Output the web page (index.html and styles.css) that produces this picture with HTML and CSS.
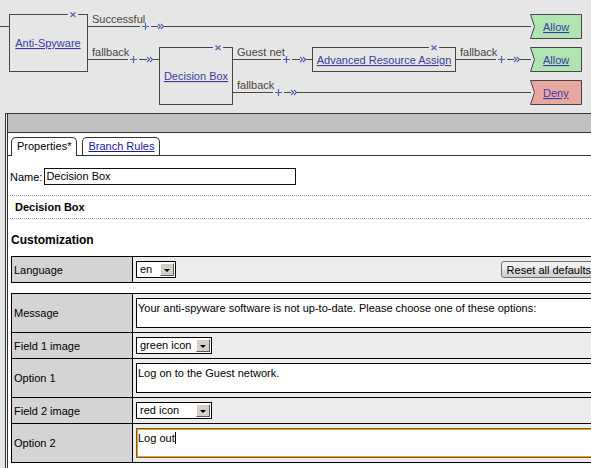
FILE: index.html
```html
<!DOCTYPE html>
<html lang="en">

<head>
    <meta charset="UTF-8">
    <meta name="viewport" content="width=device-width, initial-scale=1.0">
    <title>Decision Box - Properties</title>
    <link rel="stylesheet" href="styles.css">
</head>

<body>
    <div class="canvas">
        <svg class="flow" width="591" height="113" viewBox="0 0 591 113">
            <!-- wires -->
            <path class="wire" d="M0 26.5H9
                M87 26.5H140 M151 26.5H158 M164 26.5H531
                M87 59.5H128 M139 59.5H147 M153 59.5H159
                M232 59.5H281 M292 59.5H300 M306 59.5H312
                M232 92.5H273 M284 92.5H291 M297 92.5H531
                M455 59.5H496 M507 59.5H514 M520 59.5H531"></path>

            <!-- plus + chevrons -->
            <path class="mark" d="M142 26.5h7 M145.5 23v7
                M130 59.5h7 M133.5 56v7
                M283 59.5h7 M286.5 56v7
                M275 92.5h7 M278.5 89v7
                M498 59.5h7 M501.5 56v7"></path>
            <path class="chev" d="M158 24l2.5 2.5l-2.5 2.5 M161 24l2.5 2.5l-2.5 2.5
                M147 57l2.5 2.5l-2.5 2.5 M150 57l2.5 2.5l-2.5 2.5
                M300 57l2.5 2.5l-2.5 2.5 M303 57l2.5 2.5l-2.5 2.5
                M291 90l2.5 2.5l-2.5 2.5 M294 90l2.5 2.5l-2.5 2.5
                M514 57l2.5 2.5l-2.5 2.5 M517 57l2.5 2.5l-2.5 2.5"></path>

            <!-- nodes -->
            <rect class="node" x="9.5" y="14.5" width="78" height="57"></rect>
            <rect class="node" x="159.5" y="47.5" width="73" height="57"></rect>
            <rect class="node" x="312.5" y="47.5" width="143" height="24"></rect>

            <!-- close marks -->
            <rect class="gap" x="68" y="12" width="10" height="5"></rect>
            <rect class="gap" x="213" y="45" width="10" height="5"></rect>
            <rect class="gap" x="429" y="45" width="10" height="5"></rect>
            <path class="mark" d="M70.5 12.5l5 4.5 M75.5 12.5l-5 4.5
                M215.5 45.5l5 4.5 M220.5 45.5l-5 4.5
                M431.5 45.5l5 4.5 M436.5 45.5l-5 4.5"></path>

            <!-- endings -->
            <polygon class="end allow" points="530.5,14.5 581.5,14.5 581.5,38.5 530.5,38.5 534.5,26.5"></polygon>
            <polygon class="end allow" points="530.5,47.5 581.5,47.5 581.5,71.5 530.5,71.5 534.5,59.5"></polygon>
            <polygon class="end deny" points="530.5,80.5 581.5,80.5 581.5,104.5 530.5,104.5 534.5,92.5"></polygon>

            <!-- texts -->
            <text class="branch" x="92" y="23">Successful</text>
            <text class="branch" x="92" y="56">fallback</text>
            <text class="branch" x="237" y="56">Guest net</text>
            <text class="branch" x="237" y="89">fallback</text>
            <text class="branch" x="460" y="56">fallback</text>

            <text class="link" x="48" y="47" text-anchor="middle">Anti-Spyware</text>
            <text class="link" x="196" y="80" text-anchor="middle">Decision Box</text>
            <text class="link" x="384" y="64" text-anchor="middle">Advanced Resource Assign</text>
            <text class="link" x="543" y="31">Allow</text>
            <text class="link" x="543" y="64">Allow</text>
            <text class="link" x="543" y="97">Deny</text>
        </svg>
    </div>

    <div class="panel">
        <div class="panel-body">
            <div class="panel-bar"></div>

            <div class="tabs">
                <div class="tab active">Properties*</div>
                <div class="tab"><a href="#">Branch Rules</a></div>
            </div>

            <div class="content">
                <div class="name-row">
                    <span>Name:</span>
                    <div class="input">Decision Box</div>
                </div>
                <div class="dotted"></div>
                <div class="node-title">Decision Box</div>
                <div class="dotted"></div>

                <div class="section-title">Customization</div>

                <div class="props">
                    <div class="row">
                        <div class="label">Language</div>
                        <div class="value">
                            <div class="select lang"><span class="select-text">en</span><span class="select-arrow"></span></div>
                            <button class="btn">Reset all defaults</button>
                        </div>
                    </div>
                </div>

                <div class="props second">
                    <div class="row tall">
                        <div class="label">Message</div>
                        <div class="value">
                            <div class="textbox">Your anti-spyware software is not up-to-date. Please choose one of these options:</div>
                        </div>
                    </div>
                    <div class="row">
                        <div class="label">Field 1 image</div>
                        <div class="value">
                            <div class="select icon"><span class="select-text">green icon</span><span class="select-arrow"></span></div>
                        </div>
                    </div>
                    <div class="row tall">
                        <div class="label">Option 1</div>
                        <div class="value">
                            <div class="textbox">Log on to the Guest network.</div>
                        </div>
                    </div>
                    <div class="row">
                        <div class="label">Field 2 image</div>
                        <div class="value">
                            <div class="select icon"><span class="select-text">red icon</span><span class="select-arrow"></span></div>
                        </div>
                    </div>
                    <div class="row tall">
                        <div class="label">Option 2</div>
                        <div class="value">
                            <div class="textbox focus">Log out<span class="caret"></span></div>
                        </div>
                    </div>
                </div>
            </div>
        </div>
    </div>
</body>

</html>
```

FILE: styles.css
```css
body {
    margin: 0;
    width: 591px;
    height: 468px;
    overflow: hidden;
    background: #e6e6e6;
    font-family: 'Liberation Sans', Arial, sans-serif;
    font-size: 11px;
    color: #000;
}

.canvas {
    height: 113px;
}

.flow {
    display: block;
}

.flow .wire,
.flow .node {
    fill: none;
    stroke: #474747;
    stroke-width: 1;
}

.flow .mark,
.flow .chev {
    fill: none;
    stroke: #5262b4;
    stroke-width: 1.2;
}

.flow .gap {
    fill: #e6e6e6;
}

.flow .end {
    stroke: #474747;
    stroke-width: 1;
}

.flow .allow {
    fill: #b0e4b0;
}

.flow .deny {
    fill: #e8a8a0;
}

.flow text {
    font-family: 'Liberation Sans', Arial, sans-serif;
    font-size: 11px;
}

.flow .branch {
    fill: #4a4540;
}

.flow .link {
    fill: #3c3ca4;
    text-decoration: underline;
}

/* properties panel */

.panel {
    margin-left: 5px;
    width: 620px;
    height: 360px;
    border-top: 1px solid #333;
    border-left: 1px solid #333;
    padding-left: 1px;
    background: #f2f2f2;
}

.panel-body {
    height: 100%;
    border-left: 1px solid #333;
    background: #fff;
}

.panel-bar {
    height: 18px;
    background: #c0c0c0;
    border-bottom: 1px solid #333;
}

.tabs {
    display: flex;
    align-items: flex-end;
    gap: 5px;
    padding: 4px 0 0 3px;
    border-bottom: 1px solid #333;
}

.tab {
    height: 18px;
    box-sizing: border-box;
    padding: 0 5px;
    line-height: 17px;
    border: 1px solid #333;
    border-bottom: none;
    border-radius: 5px 5px 0 0;
    background: #fff;
}

.tab.active {
    height: 19px;
    margin-bottom: -1px;
}

.tab a {
    color: #1a1a9c;
}

.content {
    padding-left: 2px;
}

.name-row {
    display: flex;
    align-items: center;
    gap: 2px;
    margin: 12px 0 10px;
}

.input {
    width: 252px;
    height: 17px;
    box-sizing: border-box;
    border: 1px solid #111;
    padding-left: 1px;
    line-height: 15px;
}

.dotted {
    border-top: 1px dotted #9a9a9a;
}

.node-title {
    line-height: 22px;
    padding-left: 5px;
    font-weight: bold;
}

.section-title {
    margin: 14px 0 9px 1px;
    line-height: 14px;
    font-size: 12px;
    font-weight: bold;
}

.props {
    margin-left: 1px;
    width: 588px;
    border: 1px solid #000;
}

.props.second {
    margin-top: 10px;
}

.row {
    display: flex;
    height: 25px;
}

.row + .row {
    border-top: 1px solid #000;
}

.row.tall {
    height: 38px;
}

.label {
    width: 121px;
    flex-shrink: 0;
    box-sizing: border-box;
    padding-left: 2px;
    display: flex;
    align-items: center;
    background: #d4d4d4;
    border-right: 1px solid #000;
}

.value {
    flex: 1;
    display: flex;
    align-items: center;
    justify-content: space-between;
    padding: 0 3px;
    background: #ececec;
}

.select {
    display: flex;
    height: 17px;
    box-sizing: border-box;
    border: 1px solid #000;
    background: #fff;
}

.select.lang {
    width: 40px;
}

.select.icon {
    width: 76px;
}

.select-text {
    flex: 1;
    padding-left: 3px;
    line-height: 15px;
}

.select-arrow {
    width: 14px;
    margin: 1px;
    box-sizing: border-box;
    border: 1px solid;
    border-color: #fff #5a5a5a #5a5a5a #fff;
    background: #d4d0c8;
    display: flex;
    align-items: flex-end;
    justify-content: center;
    padding-bottom: 3px;
}

.select-arrow::after {
    content: "";
    border-left: 3px solid transparent;
    border-right: 3px solid transparent;
    border-top: 3px solid #000;
}

.btn {
    height: 17px;
    padding: 0 5px;
    border: 1px solid #707070;
    border-radius: 3px;
    background: linear-gradient(#f3f3f3, #ebebeb 50%, #dddddd 50%, #cfcfcf);
    font-family: 'Liberation Sans', Arial, sans-serif;
    font-size: 11px;
    color: #000;
    line-height: 14px;
}

.textbox {
    flex: 1;
    height: 30px;
    box-sizing: border-box;
    border: 1px solid #000;
    background: #fff;
    padding: 2px 1px;
    line-height: 14px;
    align-self: center;
}

.textbox.focus {
    border-color: #8a5800;
    box-shadow: inset 0 0 0 1px #e0a040;
}

.caret {
    display: inline-block;
    width: 1px;
    height: 12px;
    background: #000;
    vertical-align: -2px;
}
```
